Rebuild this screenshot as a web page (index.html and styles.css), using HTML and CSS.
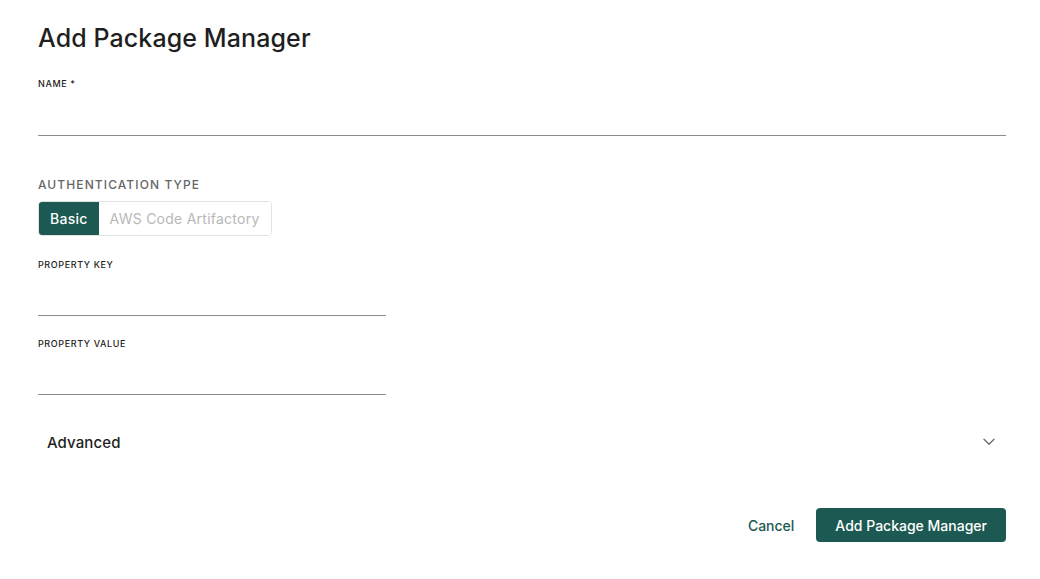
FILE: index.html
```html
<!DOCTYPE html>
<html lang="en">
<head>
<meta charset="utf-8">
<title>Add Package Manager</title>
<link rel="stylesheet" href="styles.css">
</head>
<body>
<main class="page">
  <h1 class="title">Add Package Manager</h1>

  <div class="field field-wide">
    <label class="field-label">NAME *</label>
    <input class="field-input field-input-tall" type="text">
  </div>

  <div class="section-label">AUTHENTICATION TYPE</div>
  <div class="toggle">
    <button class="toggle-btn active">Basic</button>
    <button class="toggle-btn">AWS Code Artifactory</button>
  </div>

  <div class="field field-narrow field-first">
    <label class="field-label">PROPERTY KEY</label>
    <input class="field-input" type="text">
  </div>

  <div class="field field-narrow field-second">
    <label class="field-label">PROPERTY VALUE</label>
    <input class="field-input" type="text">
  </div>

  <div class="advanced">
    <span class="advanced-title">Advanced</span>
    <svg class="chevron" width="12" height="8" viewBox="0 0 12 8" aria-hidden="true">
      <path d="M1 1.2 L6 6.2 L11 1.2" fill="none" stroke="#6b6b6b" stroke-width="1.3" stroke-linecap="round" stroke-linejoin="round"/>
    </svg>
  </div>

  <div class="footer">
    <button class="btn-link">Cancel</button>
    <button class="btn-primary">Add Package Manager</button>
  </div>
</main>
</body>
</html>
```

FILE: styles.css
```css
* { box-sizing: border-box; }

html, body {
  margin: 0;
  padding: 0;
  background: #ffffff;
}

body {
  font-family: Inter, "Noto Sans", "Liberation Sans", sans-serif;
  color: #1f1f1f;
}

.page {
  padding: 22px 34px 0 38px;
}

.title {
  margin: 0;
  font-size: 25px;
  line-height: 32px;
  font-weight: 500;
  color: #1f1f1f;
  letter-spacing: 0.1px;
}

.field {
  display: flex;
  flex-direction: column;
}

.field-wide {
  margin-top: 24px;
}

.field-narrow {
  width: 348px;
}

.field-first {
  margin-top: 23px;
}

.field-second {
  margin-top: 22px;
}

.field-label {
  font-size: 9px;
  line-height: 12px;
  font-weight: 500;
  letter-spacing: 0.6px;
  color: #222;
}

.field-input {
  height: 45px;
  border: none;
  border-bottom: 1px solid #8c8c8c;
  outline: none;
  padding: 0;
  font: inherit;
  background: transparent;
}

.field-input-tall {
  height: 46px;
}

.section-label {
  margin-top: 41px;
  font-size: 12px;
  line-height: 16px;
  font-weight: 500;
  letter-spacing: 1.1px;
  color: #666;
}

.toggle {
  margin-top: 8px;
  display: inline-flex;
  border: 1px solid #e2e2e2;
  border-radius: 4px;
  overflow: hidden;
  height: 35px;
}

.toggle-btn {
  border: none;
  background: #fff;
  font-family: inherit;
  font-size: 14px;
  font-weight: 400;
  letter-spacing: 0.25px;
  color: #b8b8b8;
  padding: 0 11px;
  height: 100%;
  cursor: pointer;
}

.toggle-btn.active {
  background: #1c5952;
  color: #ffffff;
  font-weight: 500;
  padding: 0 11px 0 11px;
}

.advanced {
  margin-top: 23px;
  height: 48px;
  display: flex;
  align-items: center;
  justify-content: space-between;
  padding: 0 11px 0 9px;
}

.advanced-title {
  font-size: 15px;
  font-weight: 500;
  color: #1f1f1f;
  letter-spacing: 0.1px;
}

.chevron {
  display: block;
}

.footer {
  margin-top: 42px;
  display: flex;
  justify-content: flex-end;
  align-items: center;
  gap: 22px;
}

.btn-link {
  border: none;
  background: transparent;
  font-family: inherit;
  font-size: 14px;
  font-weight: 500;
  color: #1c5952;
  padding: 0;
  cursor: pointer;
}

.btn-primary {
  height: 34px;
  padding: 0 19px;
  border: none;
  border-radius: 4px;
  background: #1c5952;
  color: #ffffff;
  font-family: inherit;
  font-size: 14px;
  font-weight: 500;
  cursor: pointer;
}
```
